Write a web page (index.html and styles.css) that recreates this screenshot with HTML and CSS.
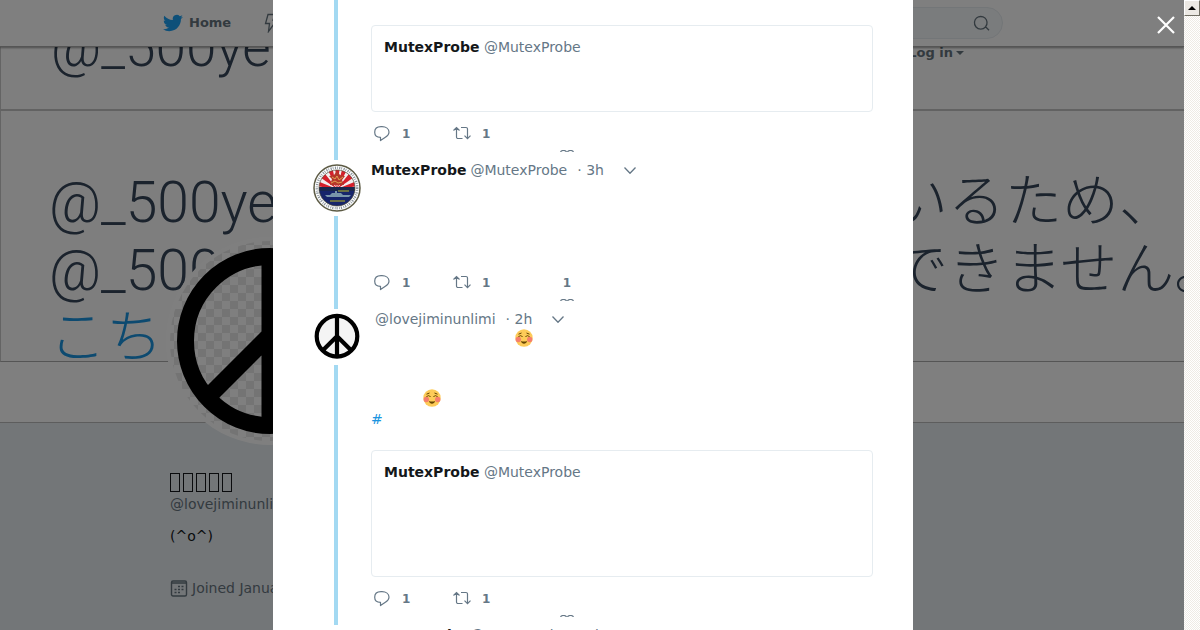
FILE: index.html
```html
<!DOCTYPE html>
<html lang="en">
<head>
  <meta charset="UTF-8">
  <meta name="viewport" content="width=device-width, initial-scale=1.0">
  <title>@lovejiminunlimi</title>
  <link rel="stylesheet" href="styles.css">
</head>
<body>
  <!-- Shared icons -->
  <svg class="sprite" aria-hidden="true">
    <symbol id="reply" viewBox="0 0 18 18">
      <path d="M8 1.700h1c4 0 7 2 7 5.300 0 2.300-1.500 4-4 5.500L7.500 15.600v-3.300C4 12.300 1.700 10.300 1.700 7.200 1.700 4 4 1.700 8 1.700z" fill="none" stroke="currentColor" stroke-width="1.200" stroke-linejoin="round"/>
    </symbol>
    <symbol id="retweet" viewBox="0 0 20 16">
      <path d="M1.500 4.500l3-3 3 3M4.500 1.500v9.500a1.500 1.500 0 0 0 1.500 1.500h4.500M9 1.500h5a1.500 1.500 0 0 1 1.500 1.500v9.500M12.500 9.700l3 3 3-3" fill="none" stroke="currentColor" stroke-width="1.200"/>
    </symbol>
    <symbol id="heart" viewBox="0 0 14 2">
      <path d="M.5 2C1 1 2 .5 3.500.5 5 .5 6 1 6.500 2M7.500 2C8 1 9 .5 10.500.5 12 .5 13 1 13.500 2" fill="none" stroke="currentColor" stroke-width="1.200"/>
    </symbol>
    <symbol id="chevron" viewBox="0 0 14 9">
      <path d="M1.500 2L7 7.700l5.500-5.700" fill="none" stroke="currentColor" stroke-width="1.300"/>
    </symbol>
    <symbol id="blush" viewBox="0 0 18 18">
      <circle cx="9" cy="9" r="8.700" fill="#fdcb58"/>
      <circle cx="3.300" cy="10.500" r="2.700" fill="#f57f6c"/>
      <circle cx="14.700" cy="10.500" r="2.700" fill="#f57f6c"/>
      <path d="M3.500 8c1-1.800 3-1.800 4 0M10.500 8c1-1.800 3-1.800 4 0M3.500 5.200L6.500 4M14.500 5.200L11.500 4" fill="none" stroke="#664500" stroke-width="1"/>
      <path d="M6 12c2 .8 4 .8 6 0-.5 3.500-5.500 3.500-6 0z" fill="#664500"/>
    </symbol>
    <pattern id="checker" width="16" height="16" patternUnits="userSpaceOnUse">
      <path d="M0 0h16v16H0z" fill="#fff"/>
      <path d="M0 0h8v8H0zM8 8h8v8H8z" fill="#e9e9e9"/>
    </pattern>
    <symbol id="peace" viewBox="0 0 208 208">
      <circle cx="104" cy="104" r="104" fill="#fff"/>
      <circle cx="104" cy="104" r="100" fill="url(#checker)"/>
      <circle cx="104" cy="104" r="84.500" fill="none" stroke="#000" stroke-width="17"/>
      <path d="M104 20v168M104 98L44 158M104 98l60 60" fill="none" stroke="#000" stroke-width="17"/>
    </symbol>
  </svg>

  <div class="page">
    <header class="topbar">
      <div class="topbar-inner">
        <a class="nav-link" href="#">
          <svg width="20" height="20" viewBox="0 0 24 24"><path fill="#1da1f2" d="M23.950 4.570a10 10 0 0 1-2.820.77 4.960 4.960 0 0 0 2.160-2.720 9.900 9.900 0 0 1-3.120 1.180 4.920 4.920 0 0 0-8.380 4.480C7.690 8.090 4.070 6.130 1.640 3.160a4.820 4.820 0 0 0-.67 2.480c0 1.710.87 3.210 2.190 4.100a4.900 4.900 0 0 1-2.230-.62v.06a4.920 4.920 0 0 0 3.950 4.830 5 5 0 0 1-2.210.08 4.940 4.940 0 0 0 4.600 3.420A9.870 9.870 0 0 1 0 19.540a14 14 0 0 0 7.550 2.210c9.050 0 14-7.500 14-13.980 0-.21 0-.42-.02-.63a9.900 9.900 0 0 0 2.420-2.570z"/></svg>
          <span>Home</span>
        </a>
        <a class="nav-link" href="#" aria-label="Moments">
          <svg width="14" height="20" viewBox="0 0 14 20"><path d="M4 1.500h7L9 7h4L4.500 18.500l1-8H1.500z" fill="none" stroke="currentColor" stroke-width="1.300"/></svg>
        </a>
        <form class="search">
          <input type="text" aria-label="Search">
          <button type="button" aria-label="Submit search">
            <svg width="18" height="18" viewBox="0 0 18 18"><path d="M14 8A6.300 6.300 0 1 1 1.500 8 6.300 6.300 0 0 1 14 8zM12.300 12.500l3.700 3.700" fill="none" stroke="currentColor" stroke-width="1.300"/></svg>
          </button>
        </form>
      </div>
    </header>

    <div class="strip">
      <p>@_500yen</p>
      <a class="login" href="#">Log in<span class="caret"></span></a>
    </div>

    <div class="banner" lang="ja">
      <p><span>@_500ye</span><span class="line-end">いるため、</span></p>
      <p><span>@_500</span><span class="line-end">できません。</span></p>
      <p><a href="#">こち</a></p>
    </div>

    <div class="stats"></div>

    <div class="profile">
      <svg class="profile-avatar"><use href="#peace"/></svg>
      <h1 class="profile-name" aria-label="Name"><i></i><i></i><i></i><i></i><i></i></h1>
      <a class="profile-handle" href="#">@lovejiminunlimi</a>
      <p class="bio">(^o^)</p>
      <p class="joined">
        <svg width="18" height="18" viewBox="0 0 18 18"><path d="M1.500 3.500a1.500 1.500 0 0 1 1.500-1.500h12a1.500 1.500 0 0 1 1.500 1.500v12a1.500 1.500 0 0 1-1.500 1.500H3a1.500 1.500 0 0 1-1.500-1.500zM1.500 4h15" fill="none" stroke="currentColor" stroke-width="1.400"/><path d="M8 7.500h2M11.500 7.500h2M4.500 10.500h2M8 10.500h2M11.500 10.500h2M4.500 13.500h2M8 13.500h2" stroke="currentColor" stroke-width="1.600"/></svg>
        Joined January 2019
      </p>
    </div>

    <div class="overlay">
      <main class="modal">
        <article class="tweet tweet-first">
          <div class="rail"><div class="line"></div></div>
          <div class="content">
            <blockquote class="quote">
              <b>MutexProbe</b> <span>@MutexProbe</span>
            </blockquote>
            <div class="actions">
              <button type="button" aria-label="Reply"><svg width="18" height="18"><use href="#reply"/></svg><span>1</span></button>
              <button type="button" aria-label="Retweet"><svg width="20" height="16"><use href="#retweet"/></svg><span>1</span></button>
              <button type="button" class="like" aria-label="Like"><span></span><svg width="14" height="2"><use href="#heart"/></svg></button>
            </div>
          </div>
        </article>

        <article class="tweet">
          <div class="rail">
            <svg class="avatar" viewBox="0 0 48 48">
              <clipPath id="seal"><circle cx="24" cy="24" r="18"/></clipPath>
              <circle cx="24" cy="24" r="23" fill="#fff" stroke="#5d5b45" stroke-width="1.500"/>
              <g clip-path="url(#seal)">
                <path d="M5 5h38v38H5z" fill="#f4eeee"/>
                <path d="M24 25L2 22v-6zM24 25L4 11l5-5zM24 25L13 2h6zM24 25L22 2h5zM24 25L30 2h6zM24 25L39 6l5 5zM24 25l22-9v6z" fill="#d5202c"/>
                <path d="M17 21l2-6-3-3 5-1 3-4 3 4 5 1-3 4 2 5z" fill="#b5372a"/>
                <path d="M19 13l3 2 2-3 2 4 4-3M18 19l4-2 3 2 4-1" stroke="#dfa253" fill="none"/>
                <path d="M5 25h38v20H5z" fill="#17256b"/>
                <path d="M5 23h38v4H5z" fill="#1b284d"/>
                <path d="M12 31h5l2-2h3v-2h2v2h4l2 2h8l-2 2H14z" fill="#7996aa"/>
                <path d="M25 27h11M17 37h15" stroke="#83863d" stroke-width="1.500"/>
              </g>
              <circle cx="24" cy="24" r="18" fill="none" stroke="#4b4b35" stroke-width=".7"/>
              <circle cx="24" cy="24" r="20.200" fill="none" stroke="#8b949c" stroke-width="2.500" stroke-dasharray="1.200 1 .8 1.400"/>
            </svg>
            <div class="line"></div>
          </div>
          <div class="content">
            <div class="head">
              <b>MutexProbe</b>
              <a href="#">@MutexProbe</a>
              <time>· 3h</time>
              <button type="button" aria-label="More"><svg width="14" height="10" viewBox="0 0 14 9"><use href="#chevron"/></svg></button>
            </div>
            <div class="text"></div>
            <div class="actions">
              <button type="button" aria-label="Reply"><svg width="18" height="18"><use href="#reply"/></svg><span>1</span></button>
              <button type="button" aria-label="Retweet"><svg width="20" height="16"><use href="#retweet"/></svg><span>1</span></button>
              <button type="button" class="like" aria-label="Like"><span>1</span><svg width="14" height="2"><use href="#heart"/></svg></button>
            </div>
          </div>
        </article>

        <article class="tweet">
          <div class="rail">
            <svg class="avatar" viewBox="7 10 194 194">
              <circle cx="104" cy="104" r="82" fill="#f4f4f4" stroke="#000" stroke-width="17"/>
              <path d="M104 20v168M104 104L46 162M104 104l58 58" fill="none" stroke="#000" stroke-width="17"/>
            </svg>
            <div class="line"></div>
          </div>
          <div class="content">
            <div class="head">
              <b></b>
              <a href="#">@lovejiminunlimi</a>
              <time>· 2h</time>
              <button type="button" aria-label="More"><svg width="14" height="10" viewBox="0 0 14 9"><use href="#chevron"/></svg></button>
            </div>
            <div class="text text-long">
              <p class="emoji-far"><svg width="18" height="18"><use href="#blush"/></svg></p>
              <p></p>
              <p></p>
              <p class="emoji-near"><svg width="18" height="18"><use href="#blush"/></svg></p>
              <p><a href="#">#</a></p>
            </div>
            <blockquote class="quote quote-tall">
              <b>MutexProbe</b> <span>@MutexProbe</span>
            </blockquote>
            <div class="actions">
              <button type="button" aria-label="Reply"><svg width="18" height="18"><use href="#reply"/></svg><span>1</span></button>
              <button type="button" aria-label="Retweet"><svg width="20" height="16"><use href="#retweet"/></svg><span>1</span></button>
              <button type="button" class="like" aria-label="Like"><span></span><svg width="14" height="2"><use href="#heart"/></svg></button>
            </div>
          </div>
        </article>

        <article class="tweet">
          <div class="rail"></div>
          <div class="content">
            <div class="head">
              <b>MutexProbe</b>
              <a href="#">@MutexProbe</a>
              <time>· 2h</time>
            </div>
          </div>
        </article>
      </main>
      <button type="button" class="close" aria-label="Close">
        <svg width="20" height="20" viewBox="0 0 20 20"><path d="M2 2l16 16M18 2L2 18" stroke="#fff" stroke-width="2.200"/></svg>
      </button>
    </div>
  </div>

  <div class="scrollbar">
    <button type="button" aria-label="Scroll up"><span></span></button>
  </div>
</body>
</html>
```
FILE: styles.css
```css
* {
  box-sizing: border-box;
}

body {
  display: flex;
  height: 100vh;
  margin: 0;
  overflow: hidden;
  font-family: "DejaVu Sans", sans-serif;
  font-size: 14px;
  line-height: 20px;
  color: #14171a;
}

p, h1, blockquote {
  margin: 0;
}

a {
  color: #1b95e0;
  text-decoration: none;
}

button {
  padding: 0;
  border: none;
  background: none;
  font: inherit;
  color: inherit;
  cursor: pointer;
}

svg {
  display: block;
  flex: none;
}

.sprite {
  position: absolute;
  width: 0;
  height: 0;
}

.page {
  position: relative;
  flex: 1;
  min-width: 0;
  overflow: hidden;
  background: #e6ecf0;
}

/* Top bar */
.topbar {
  position: relative;
  z-index: 1;
  height: 47px;
  padding-right: 18px;
  background: #fff;
  border-bottom: 1px solid #aaa;
  box-shadow: 0 1px 2px rgba(0, 0, 0, 0.4);
}

.topbar-inner {
  display: flex;
  align-items: center;
  gap: 33px;
  max-width: 840px;
  height: 46px;
  margin: 0 auto;
}

.nav-link {
  display: flex;
  align-items: center;
  gap: 6px;
  font-size: 13px;
  font-weight: bold;
  color: #66757f;
}

.search {
  display: flex;
  align-items: center;
  width: 220px;
  height: 32px;
  margin-left: auto;
  padding-right: 11px;
  border: 1px solid #e6ecf0;
  border-radius: 16px;
  background: #f5f8fa;
  color: #66757f;
}

.search input {
  flex: 1;
  min-width: 0;
  border: none;
  background: none;
}

/* Banner */
.strip,
.banner {
  overflow: hidden;
  border-left: 1px solid #c8c8c8;
  background: #fdfdfd;
  font-family: Roboto, "Noto Sans CJK JP", sans-serif;
  font-size: 57px;
  font-weight: 300;
  line-height: 68px;
  color: #36465a;
  white-space: nowrap;
}

.strip {
  display: flex;
  align-items: flex-end;
  height: 64px;
  padding: 0 0 28px 50px;
  border-bottom: 2px solid #c4c4c4;
  font-size: 55px;
}

.login {
  position: absolute;
  top: 43px;
  right: 220px;
  display: flex;
  align-items: center;
  gap: 3px;
  font-family: "DejaVu Sans", sans-serif;
  font-size: 13px;
  font-weight: bold;
  line-height: 20px;
  color: #66757f;
}

.caret {
  border: 4px solid transparent;
  border-top-color: #66757f;
  border-bottom: none;
}

.banner {
  height: 251px;
  padding: 58px 0 0 48px;
  border-bottom: 1px solid #aaa;
}

.banner p {
  display: flex;
}

.banner p:last-child,
.banner .line-end {
  font-family: "Noto Sans CJK JP", sans-serif;
  line-height: 54px;
}

.banner .line-end {
  width: 293px;
  margin-left: auto;
}

.stats {
  height: 61px;
  background: #fff;
  border-bottom: 1px solid #bbb;
}

/* Profile column */
.profile {
  position: relative;
  padding: 50px 0 0 170px;
  color: #14171a;
}

.profile-avatar {
  position: absolute;
  top: -186px;
  left: 166px;
  width: 208px;
  height: 208px;
}

.profile-name {
  display: flex;
  gap: 3px;
  height: 21px;
}

.profile-name i {
  width: 10px;
  height: 19px;
  border: 1px solid #14171a;
}

.profile-handle {
  display: block;
  color: #66757f;
}

.bio {
  padding: 12px 0 32px;
}

.joined {
  display: flex;
  align-items: center;
  gap: 4px;
  color: #66757f;
}

/* Thread */
.overlay {
  position: absolute;
  inset: 0;
  z-index: 2;
  padding-left: 2px;
  overflow: hidden;
  background: rgba(0, 0, 0, 0.5);
}

.modal {
  max-width: 640px;
  min-height: 100%;
  margin: 0 auto;
  padding: 0 40px;
  background: #fff;
}

.close {
  position: absolute;
  top: 15px;
  right: 8px;
}

.tweet {
  display: flex;
  gap: 10px;
}

.rail {
  display: flex;
  flex-direction: column;
  align-items: center;
  gap: 4px;
  width: 48px;
  padding-top: 4px;
}

.tweet-first .rail {
  padding-top: 0;
}

.avatar {
  width: 48px;
  height: 48px;
}

.line {
  flex: 1;
  width: 4px;
  margin-right: 2px;
  background: #a3d9f2;
}

.content {
  flex: 1;
}

.tweet-first .content {
  padding-top: 25px;
}

.head {
  display: flex;
  align-items: center;
  color: #657786;
}

.head b,
.quote b {
  color: #14171a;
}

.head a {
  margin-left: 4px;
  color: #657786;
}

.head time {
  margin-left: 10px;
}

.head button {
  margin-left: 19px;
}

.text {
  min-height: 92px;
}

.text p {
  min-height: 20px;
}

.text-long {
  padding-bottom: 21px;
}

.emoji-far {
  padding-left: 144px;
}

.emoji-near {
  padding-left: 52px;
}

.quote {
  min-height: 87px;
  margin-bottom: 11px;
  padding: 11px 12px;
  border: 1px solid #e6ecf0;
  border-radius: 4px;
  color: #657786;
}

.quote-tall {
  min-height: 127px;
}

.actions {
  display: flex;
  align-items: flex-start;
  height: 37px;
  padding-top: 1px;
  color: #657786;
  font-size: 12px;
  font-weight: bold;
}

.actions button {
  display: flex;
  align-items: center;
  gap: 11px;
  width: 80px;
  height: 20px;
  padding-left: 2px;
}

.actions button + button {
  gap: 10px;
  padding-left: 1px;
}

.actions .like {
  flex-direction: column;
  gap: 6px;
  width: 14px;
  height: 36px;
  margin-left: 29px;
  padding: 0;
}

.like span {
  height: 20px;
}

/* Scrollbar */
.scrollbar {
  width: 16px;
  background: repeating-conic-gradient(#fff 0 25%, #eeebe5 0 50%) 0 0 / 2px 2px;
}

.scrollbar button {
  display: flex;
  align-items: center;
  justify-content: center;
  width: 16px;
  height: 16px;
  border: 1px solid #fff;
  border-right-color: #716f64;
  border-bottom-color: #716f64;
  background: #ece9e4;
}

.scrollbar span {
  border: 4px solid transparent;
  border-top: none;
  border-bottom-color: #000;
}
```
